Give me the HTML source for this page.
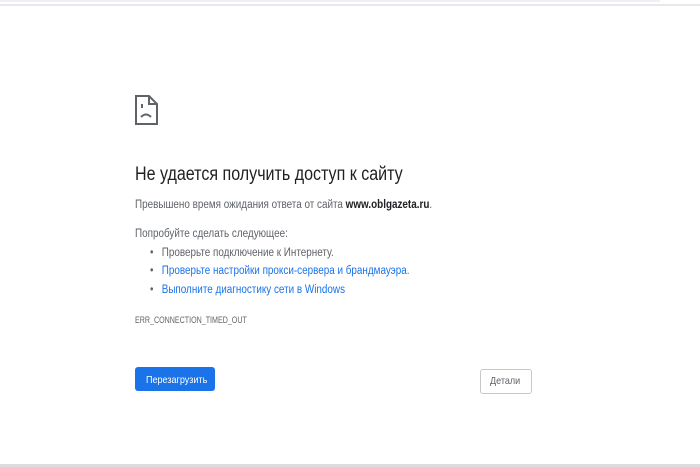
<!DOCTYPE html>
<html><head><meta charset="utf-8"><style>
body{margin:0;width:700px;height:467px;background:#fff;position:relative;overflow:hidden;font-family:"Liberation Sans",sans-serif;}
.a{position:absolute;white-space:nowrap;transform-origin:0 0;transform:scaleX(0.86);}
.g{color:#5f6368;font-size:11.5px;}
.l{color:#1a73e8;}
</style></head><body>
<div style="position:absolute;left:0;top:0;width:660px;height:2px;background:#eef0f4"></div>
<div style="position:absolute;left:0;top:4px;width:700px;height:2px;background:#e6e8ec"></div>
<div style="position:absolute;left:0;top:464px;width:700px;height:3px;background:#dcdcdc"></div>
<svg style="position:absolute;left:135px;top:95px" width="23" height="30" viewBox="0 0 23 30">
<path d="M1 1H14L22 9V29H1Z" fill="none" stroke="#5f6368" stroke-width="2"/>
<path d="M14 1V9H22" fill="none" stroke="#5f6368" stroke-width="2"/>
<rect x="6" y="9" width="2" height="4" fill="#5f6368"/>
<path d="M6 22Q11 17 16 22" fill="none" stroke="#5f6368" stroke-width="2"/>
</svg>
<div class="a" style="left:135px;top:164px;font-size:19px;color:#202124;transform:scaleX(0.845);">Не удается получить доступ к сайту</div>
<div class="a g" style="left:135px;top:199px;">Превышено время ожидания ответа от сайта <b style="color:#202124">www.oblgazeta.ru</b>.</div>
<div class="a g" style="left:135px;top:228px;">Попробуйте сделать следующее:</div>
<div class="a g" style="left:150px;top:247px;">•&nbsp;&nbsp; Проверьте подключение к Интернету.</div>
<div class="a g" style="left:150px;top:265px;">•&nbsp;&nbsp; <span class="l">Проверьте настройки прокси-сервера и брандмауэра.</span></div>
<div class="a g" style="left:150px;top:284px;">•&nbsp;&nbsp; <span class="l">Выполните диагностику сети в Windows</span></div>
<div class="a" style="left:135px;top:315px;font-size:9px;color:#5f6368;transform:scaleX(0.79);">ERR_CONNECTION_TIMED_OUT</div>
<div style="position:absolute;left:135px;top:367px;width:80px;height:24px;background:#1a73e8;border-radius:3px;"></div>
<div class="a" style="left:146px;top:374px;font-size:10.5px;color:#fff;">Перезагрузить</div>
<div style="position:absolute;left:480px;top:369px;width:50px;height:23px;border:1px solid #c8c8c8;border-radius:3px;"></div>
<div class="a" style="left:490px;top:375px;font-size:10.5px;color:#5f6368;">Детали</div>
</body></html>
